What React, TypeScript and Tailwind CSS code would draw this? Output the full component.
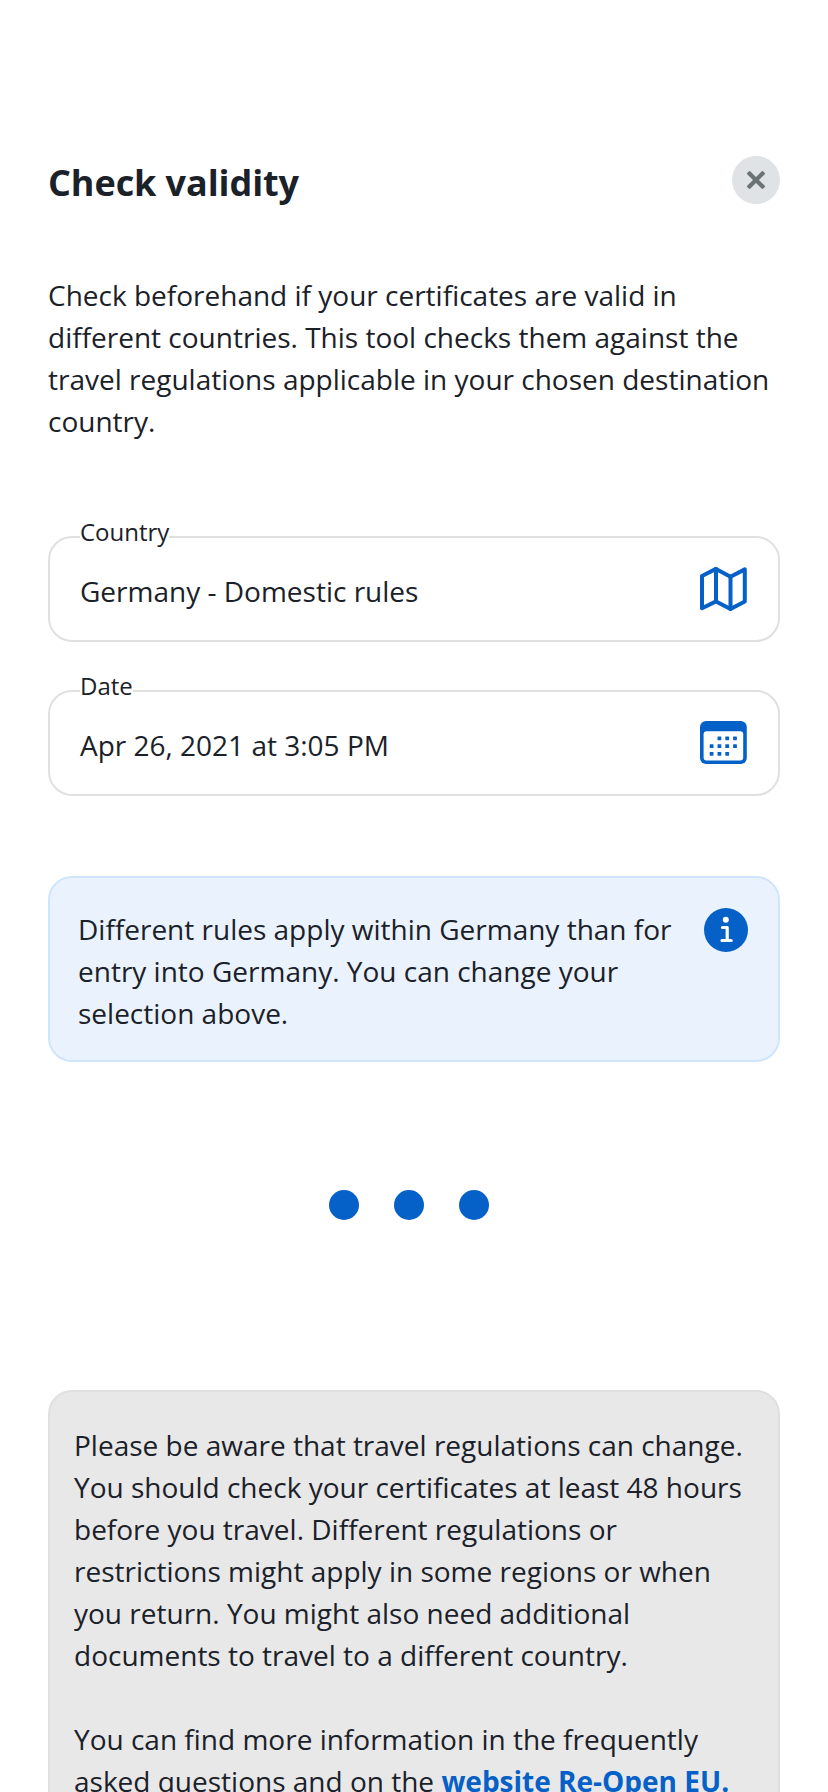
import type { ReactNode } from "react";

function MapIcon() {
  return (
    <svg className="h-12 w-12" viewBox="0 0 48 48" fill="none" stroke="#0560c7" strokeWidth="4" strokeLinecap="round" strokeLinejoin="round">
      <path d="M2 9 L16 1.9 L30.5 9.7 L44.8 2.4 V34.6 L30.5 42.1 L16 34.4 L2 41.2 Z" />
      <path d="M16 1.9 V34.4 M30.5 9.7 V42.1" />
    </svg>
  );
}

const calendarDots = [
  [19.4, 17.3], [27.2, 17.3], [35, 17.3],
  [11.6, 25.1], [19.4, 25.1], [27.2, 25.1], [35, 25.1],
  [11.6, 32.8], [19.4, 32.8], [27.2, 32.8],
];

function CalendarIcon() {
  return (
    <svg className="h-12 w-12" viewBox="0 0 48 48">
      <rect x="0" y="0" width="46.8" height="43" rx="6" fill="#0560c7" />
      <rect x="3.6" y="10.3" width="39.6" height="29.2" rx="3" fill="#fff" />
      {calendarDots.map(([cx, cy]) => (
        <rect key={`${cx}-${cy}`} x={cx - 1.9} y={cy - 1.9} width="3.8" height="3.8" rx="0.6" fill="#0560c7" />
      ))}
    </svg>
  );
}

function InfoIcon() {
  return (
    <svg className="h-11 w-11 shrink-0" viewBox="0 0 44 44">
      <circle cx="22" cy="22" r="22" fill="#0560c7" />
      <circle cx="21.8" cy="11.7" r="3" fill="#fff" />
      <path d="M18.5 19.5 H23.2 V32.5 M18 32.5 H27.2" fill="none" stroke="#fff" strokeWidth="3.2" strokeLinecap="round" strokeLinejoin="round" />
    </svg>
  );
}

function Field({ label, value, children }: { label: string; value: string; children: ReactNode }) {
  return (
    <div className="relative flex h-[106px] items-start justify-between rounded-3xl border-2 border-[#e0e0e0] pr-7 pl-[30px]">
      <span className="absolute -top-[23px] left-[30px] bg-white text-2xl leading-[33px]">{label}</span>
      <span className="pt-8 leading-[42px]">{value}</span>
      <span className="pt-[29px] pr-0.5">{children}</span>
    </div>
  );
}

export default function App() {
  return (
    <main className="flex h-[1792px] flex-col overflow-hidden bg-white px-12 pt-[156px] font-['Open_Sans',sans-serif] text-[28px] leading-[42px] text-[#1b2129]">
      <header className="flex h-[118px] shrink-0 items-start justify-between">
        <h1 className="pt-0.5 text-4xl leading-[49px] font-bold tracking-[-0.08px]">Check validity</h1>
        <button aria-label="Close" className="flex h-12 w-12 items-center justify-center rounded-full bg-[#dfe3e6]">
          <svg className="h-5 w-5" viewBox="0 0 20 20" fill="#6a7473">
            <rect x="-1.2" y="7.9" width="22.4" height="4.2" rx="1.2" transform="rotate(45 10 10)" />
            <rect x="-1.2" y="7.9" width="22.4" height="4.2" rx="1.2" transform="rotate(-45 10 10)" />
          </svg>
        </button>
      </header>

      <p className="shrink-0">
        Check beforehand if your certificates are valid in
        <br />
        different countries. This tool checks them against the
        <br />
        travel regulations applicable in your chosen destination
        <br />
        country.
      </p>

      <section className="mt-[94px] flex shrink-0 flex-col gap-12">
        <Field label="Country" value="Germany - Domestic rules">
          <MapIcon />
        </Field>
        <Field label="Date" value="Apr 26, 2021 at 3:05 PM">
          <CalendarIcon />
        </Field>
      </section>

      <section className="mt-20 flex h-[186px] shrink-0 justify-between rounded-3xl border-2 border-[#cfe5fd] bg-[#eaf3fd] pt-[30px] pr-[30px] pl-7">
        <p>
          Different rules apply within Germany than for
          <br />
          entry into Germany. You can change your
          <br />
          selection above.
        </p>
        <InfoIcon />
      </section>

      <div className="mt-32 flex shrink-0 gap-[35px] pl-[281px]">
        <span className="h-[30px] w-[30px] rounded-full bg-[#0560c7]" />
        <span className="h-[30px] w-[30px] rounded-full bg-[#0560c7]" />
        <span className="h-[30px] w-[30px] rounded-full bg-[#0560c7]" />
      </div>

      <section className="mt-[170px] h-[460px] shrink-0 rounded-t-3xl border-2 border-[#e0e0e0] bg-[#e8e8e8] pt-8 pl-6 whitespace-nowrap">
        <p>
          Please be aware that travel regulations can change.
          <br />
          You should check your certificates at least 48 hours
          <br />
          before you travel. Different regulations or
          <br />
          restrictions might apply in some regions or when
          <br />
          you return. You might also need additional
          <br />
          documents to travel to a different country.
        </p>
        <p className="mt-[42px]">
          You can find more information in the frequently
          <br />
          asked questions and on the <a className="font-bold text-[#0560c7]">website Re-Open EU.</a>
        </p>
      </section>
    </main>
  );
}
